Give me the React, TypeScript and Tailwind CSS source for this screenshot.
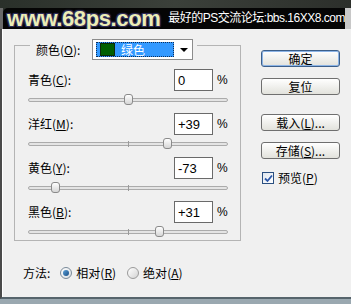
import React from "react";

const rows = [
  { name: "青色", hot: "C", value: 0, text: "0" },
  { name: "洋红", hot: "M", value: 39, text: "+39" },
  { name: "黄色", hot: "Y", value: -73, text: "-73" },
  { name: "黑色", hot: "B", value: 31, text: "+31" },
];

function Hot({ name, k, colon = true }: { name: string; k: string; colon?: boolean }) {
  return (
    <span>
      {name}(<span className="underline underline-offset-1">{k}</span>){colon ? ":" : ""}
    </span>
  );
}

function Slider({ value }: { value: number }) {
  return (
    <div className="relative h-[18px] w-[200px]">
      <div className="absolute left-0 right-0 top-[7px] h-[4px] rounded-[2px] border border-[#ababab] bg-[#e4e4e4]" />
      <div className="absolute left-[100px] top-[6px] h-[6px] w-px bg-[#9a9a9a]" />
      {/* thumb position comes from the value */}
      <div
        className="absolute top-[3px] h-[11px] w-[9px] rounded-[3px] border border-[#8a8a8a] bg-gradient-to-b from-[#ffffff] to-[#d6d6d6]"
        style={{ left: 100 + value - 4.5 }}
      />
    </div>
  );
}

function Btn({ children, primary }: { children: React.ReactNode; primary?: boolean }) {
  return (
    <button
      className={
        primary
          ? "flex h-[17px] w-[79px] items-center justify-center rounded-[3px] border border-[#3c5f8a] bg-gradient-to-b from-[#ffffff] to-[#e2e2dc] text-[12px] leading-none text-black shadow-[inset_0_0_0_1px_#8cb4e6]"
          : "flex h-[17px] w-[79px] items-center justify-center rounded-[3px] border border-[#6f6f6f] bg-gradient-to-b from-[#ffffff] to-[#e2e2dc] text-[12px] leading-none text-black"
      }
    >
      {children}
    </button>
  );
}

export default function App() {
  return (
    <div className="flex h-[304px] w-[351px] flex-col overflow-hidden bg-[#9aa8b0] font-['SimSun','Noto_Sans_CJK_SC',sans-serif] text-[12px] text-black">
      {/* banner */}
      <div className="flex h-[29px] flex-col bg-gradient-to-r from-[#2a302a] via-[#3b403a] to-[#2c2f2b]">
        <div className="h-[8px]" />
        <div className="flex h-[21px]">
          <div className="w-[3px] bg-[#6a6a6a]" />
          <div className="flex flex-1 items-end whitespace-nowrap rounded-tl-[5px] bg-[#050505] pl-[4px]">
            <div className="shrink-0 font-['Liberation_Sans',Arial,sans-serif] text-[22px] font-bold leading-[20px] tracking-[-0.4px] text-[#ecedb6] [text-shadow:1px_1px_0_#2c2a58,-1px_-1px_0_#2c2a58,1px_-1px_0_#2c2a58,-1px_1px_0_#2c2a58,0_0_3px_#3a3870]">
              www.68ps.com
            </div>
            <div className="mb-[5px] ml-[8px] shrink-0 font-['Liberation_Sans','Noto_Sans_CJK_SC',sans-serif] text-[12px] leading-none tracking-[-0.5px] text-white">
              最好的PS交流论坛:bbs.16XX8.com
            </div>
          </div>
          <div className="w-[6px] bg-[#c8c8c8]" />
        </div>
      </div>

      {/* dialog body */}
      <div className="flex h-[270px] border-b-[2px] border-l-[2px] border-b-[#56646c] border-l-[#4a4a4a] bg-[#f0f0f0]">
        <div className="flex flex-col border-l border-white">
          <div className="relative ml-[11px] mt-[16px] h-[196px] w-[227px] border border-[#b4b4b4] pl-[13px] pt-[23px]">
            {/* legend over the group border */}
            <div className="absolute left-[15px] top-[-7px] flex h-[21px] items-center bg-[#f0f0f0] pl-[6px] pr-[4px]">
              <span className="w-[56px]">
                <Hot name="颜色" k="O" />
              </span>
              <div className="flex h-[21px] w-[101px] items-center border border-[#8c8c8c] bg-white pl-[3px]">
                <div className="flex h-[15px] w-[78px] items-center border border-dotted border-[#10305a] bg-[#3399ff] pl-[3px]">
                  <div className="h-[13px] w-[15px] border border-[#0c2a0c] bg-[#005f00]" />
                  <span className="ml-[6px] leading-none text-white">绿色</span>
                </div>
                <div className="ml-[6px] h-0 w-0 border-l-[4px] border-r-[4px] border-t-[4px] border-l-transparent border-r-transparent border-t-black" />
              </div>
            </div>

            {rows.map((r) => (
              <div key={r.hot} className="mb-[4px] flex flex-col">
                <div className="flex h-[22px] items-center">
                  <span className="w-[146px]">
                    <Hot name={r.name} k={r.hot} />
                  </span>
                  <div className="flex h-[22px] w-[39px] items-center border border-[#6a6a6a] bg-white px-[3px] font-['Liberation_Sans',Arial,sans-serif] text-[13px] leading-none">
                    {r.text}
                  </div>
                  <span className="ml-[4px] font-['Liberation_Sans',Arial,sans-serif] text-[12px]">%</span>
                </div>
                <Slider value={r.value} />
              </div>
            ))}
          </div>

          {/* method */}
          <div className="ml-[20px] mt-[25px] flex h-[14px] items-center">
            <span>方法:</span>
            <div className="ml-[10px] flex h-[12px] w-[12px] items-center justify-center rounded-full border border-[#7a8a99] bg-gradient-to-br from-[#ffffff] to-[#d8dde2]">
              <div className="h-[6px] w-[6px] rounded-full bg-gradient-to-br from-[#5aa0d8] to-[#1a4f86]" />
            </div>
            <span className="ml-[4px]">
              <Hot name="相对" k="R" colon={false} />
            </span>
            <div className="ml-[11px] h-[12px] w-[12px] rounded-full border border-[#9a9a9a] bg-gradient-to-br from-[#ffffff] to-[#d4d4d4]" />
            <span className="ml-[4px]">
              <Hot name="绝对" k="A" colon={false} />
            </span>
          </div>
        </div>

        {/* buttons */}
        <div className="ml-[20px] mt-[21px] flex flex-col">
          <Btn primary>确定</Btn>
          <div className="mt-[11px]">
            <Btn>复位</Btn>
          </div>
          <div className="mt-[19px]">
            <Btn>
              载入(<span className="underline underline-offset-1">L</span>)...
            </Btn>
          </div>
          <div className="mt-[11px]">
            <Btn>
              存储(<span className="underline underline-offset-1">S</span>)...
            </Btn>
          </div>
          <div className="mt-[10px] flex items-center pl-[1px]">
            <div className="flex h-[12px] w-[12px] items-center justify-center border border-[#2a4f80] bg-gradient-to-br from-[#dfe6ee] to-[#ffffff]">
              <svg width="9" height="9" viewBox="0 0 9 9">
                <path d="M1 4.5 L3.5 7 L8 1.5" fill="none" stroke="#2c57a8" strokeWidth="1.8" />
              </svg>
            </div>
            <span className="ml-[4px]">
              <Hot name="预览" k="P" colon={false} />
            </span>
          </div>
        </div>
      </div>
    </div>
  );
}
